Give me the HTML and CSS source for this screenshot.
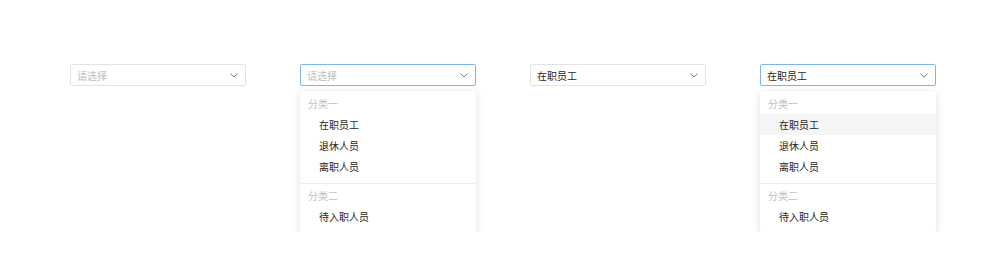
FILE: index.html
```html
<!DOCTYPE html>
<html lang="zh-CN">
<head>
    <meta charset="UTF-8">
    <title>Select</title>
    <link rel="stylesheet" href="styles.css">
</head>
<body>

<div class="demos">
    <div class="select">
        <div class="select-box">
            <span class="placeholder">请选择</span>
            <svg class="arrow" width="8" height="5" viewBox="0 0 8 5"><path d="M0.5 0.7l3.5 3.3 3.5-3.3" fill="none" stroke="#777" stroke-width="1"/></svg>
        </div>
    </div>

    <div class="select">
        <div class="select-box active">
            <span class="placeholder">请选择</span>
            <svg class="arrow" width="8" height="5" viewBox="0 0 8 5"><path d="M0.5 0.7l3.5 3.3 3.5-3.3" fill="none" stroke="#777" stroke-width="1"/></svg>
        </div>
        <div class="menu">
            <div class="group-title">分类一</div>
            <div class="option">在职员工</div>
            <div class="option">退休人员</div>
            <div class="option">离职人员</div>
            <div class="divider"></div>
            <div class="group-title">分类二</div>
            <div class="option">待入职人员</div>
        </div>
    </div>

    <div class="select">
        <div class="select-box">
            <span class="value">在职员工</span>
            <svg class="arrow" width="8" height="5" viewBox="0 0 8 5"><path d="M0.5 0.7l3.5 3.3 3.5-3.3" fill="none" stroke="#777" stroke-width="1"/></svg>
        </div>
    </div>

    <div class="select">
        <div class="select-box active">
            <span class="value">在职员工</span>
            <svg class="arrow" width="8" height="5" viewBox="0 0 8 5"><path d="M0.5 0.7l3.5 3.3 3.5-3.3" fill="none" stroke="#777" stroke-width="1"/></svg>
        </div>
        <div class="menu">
            <div class="group-title">分类一</div>
            <div class="option selected">在职员工</div>
            <div class="option">退休人员</div>
            <div class="option">离职人员</div>
            <div class="divider"></div>
            <div class="group-title">分类二</div>
            <div class="option">待入职人员</div>
        </div>
    </div>
</div>

</body>
</html>
```

FILE: styles.css
```css
body {
    margin: 0;
    padding: 0;
    background-color: #fff;
    font-family: 'Noto Sans CJK SC', 'Noto Sans', sans-serif;
    font-size: 10px;
    color: #262626;
}
.demos {
    display: flex;
    gap: 54px;
    padding: 64px 0 0 70px;
}
.select {
    width: 176px;
}
.select-box {
    box-sizing: border-box;
    height: 22px;
    border: 1px solid #e3e3e3;
    border-radius: 2px;
    padding: 0 6px;
    display: flex;
    align-items: center;
    justify-content: space-between;
}
.select-box.active {
    border-color: #7fb2f3;
}
.placeholder {
    color: #bdbdbd;
}
.value {
    color: #262626;
}
.arrow {
    margin-right: 1px;
}
.menu {
    margin-top: 5px;
    background-color: #fff;
    border-radius: 2px;
    box-shadow: 0 2px 8px rgba(0,0,0,0.13);
    padding: 2px 0 5px;
}
.group-title {
    height: 21px;
    line-height: 21px;
    padding-left: 8px;
    color: #c0c0c0;
}
.option {
    height: 21px;
    line-height: 21px;
    padding-left: 19px;
    color: #262626;
}
.option.selected {
    background-color: #f5f5f5;
}
.divider {
    height: 1px;
    background-color: #eee;
    margin: 6px 0 1px;
}
```
